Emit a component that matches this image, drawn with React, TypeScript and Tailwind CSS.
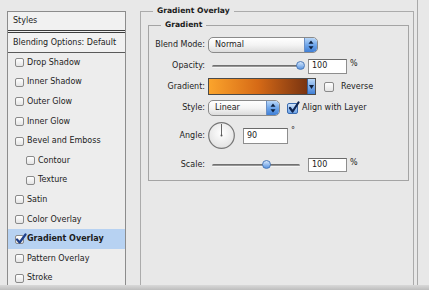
import React from 'react';

const Box: React.FC<{ checked?: boolean; className?: string }> = ({ checked, className = '' }) => (
  <span
    className={`relative inline-block w-[9px] h-[9px] shrink-0 rounded-[2px] border border-[#8a8a8a] bg-gradient-to-b from-white to-[#e4e4e4] ${className}`}
  >
    {checked && (
      <svg className="absolute -top-[3px] -left-[1px]" width="12" height="12" viewBox="0 0 12 12">
        <path d="M2 6.5 L4.6 9.5 L10.5 1.5" fill="none" stroke="#1d3f8a" strokeWidth="2.2" strokeLinecap="round" strokeLinejoin="round" />
      </svg>
    )}
  </span>
);

const Stepper: React.FC = () => (
  <span className="flex items-center justify-center w-[13px] self-stretch rounded-r-[4px] border-l border-[#6b8fc4] bg-gradient-to-b from-[#b9d7f8] via-[#6fa6ea] to-[#3f7fd6]">
    <svg width="6" height="10" viewBox="0 0 6 10">
      <path d="M3 0.5 L5.5 3.8 L0.5 3.8 Z" fill="#0d1f3c" />
      <path d="M3 9.5 L5.5 6.2 L0.5 6.2 Z" fill="#0d1f3c" />
    </svg>
  </span>
);

const Select: React.FC<{ label: string; w: string }> = ({ label, w }) => (
  <div className={`flex h-[16px] ${w} rounded-[5px] border border-[#8a8a8a] bg-gradient-to-b from-white via-[#f4f4f4] to-[#dcdcdc] overflow-hidden`}>
    <span className="flex-1 pl-[6px] leading-[14px]">{label}</span>
    <Stepper />
  </div>
);

const Slider: React.FC<{ thumb: number }> = ({ thumb }) => (
  <div className="relative ml-[3px] w-[98px] h-[12px]">
    <div className="absolute left-[4px] right-[6px] top-[5px] h-[3px] rounded-full bg-gradient-to-b from-[#5e5e5e] to-[#a9a9a9] border-b border-[#f4f4f4]" />
    <div
      className="absolute top-[1px] w-[9px] h-[9px] rounded-full border border-[#4b79b8] bg-gradient-to-b from-[#d4e6fb] to-[#5a95e0]"
      style={{ left: thumb }}
    />
  </div>
);

const Field: React.FC<{ value: string; w: string; h: string; className?: string }> = ({ value, w, h, className = '' }) => (
  <div className={`${w} ${h} border border-[#8e8e8e] border-t-[#6a6a6a] bg-white pl-[3px] flex items-center ${className}`}>
    {value}
  </div>
);

const Row: React.FC<{ label: string; h: string; className?: string; children: React.ReactNode }> = ({ label, h, className = '', children }) => (
  <div className={`flex items-center ${h} ${className}`}>
    <span className="w-[56px] text-right shrink-0">{label}</span>
    {children}
  </div>
);

const styles: { name: string; indent?: boolean; active?: boolean }[] = [
  { name: 'Drop Shadow' },
  { name: 'Inner Shadow' },
  { name: 'Outer Glow' },
  { name: 'Inner Glow' },
  { name: 'Bevel and Emboss' },
  { name: 'Contour', indent: true },
  { name: 'Texture', indent: true },
  { name: 'Satin' },
  { name: 'Color Overlay' },
  { name: 'Gradient Overlay', active: true },
  { name: 'Pattern Overlay' },
  { name: 'Stroke' },
];

const App: React.FC = () => {
  return (
    <div className="w-[429px] h-[290px] overflow-hidden bg-[#e8e8e8] text-[#1c1c1c] text-[8px] font-['DejaVu_Sans',sans-serif] flex flex-col">
      <div className="flex flex-1 min-h-0">
        {/* styles list */}
        <div className="ml-[7px] mt-[11px] w-[119px] border border-b-0 border-[#8c8c8c] bg-[#ededed] flex flex-col">
          <div className="h-[21px] shrink-0 pl-[5px] flex items-center bg-[#f1f1f1] border-b-[3px] border-double border-[#3c3c3c]">Styles</div>
          <div className="h-[20px] shrink-0 pl-[5px] flex items-center bg-[#f1f1f1] border-b border-[#5a5a5a]">Blending Options: Default</div>
          {styles.map((s) => (
            <div
              key={s.name}
              className={`h-[19.6px] shrink-0 flex items-center ${s.indent ? 'pl-[18px]' : 'pl-[7px]'} ${s.active ? 'bg-[#b7d2f2] font-bold' : ''}`}
            >
              <Box checked={s.active} />
              <span className="ml-[3px]">{s.name}</span>
            </div>
          ))}
        </div>

        {/* gradient overlay */}
        <fieldset className="ml-[14px] mt-[4px] w-[274px] border border-b-0 border-[#ababab] flex flex-col">
          <legend className="ml-[12px] px-[4px] h-[14px] leading-[14px] font-bold text-[7.6px]">Gradient Overlay</legend>
          <fieldset className="ml-[7px] mr-[4px] border border-[#a4a4a4] pt-[5px] pb-[8px]">
            <legend className="ml-[12px] px-[4px] h-[14px] leading-[14px] font-bold text-[7.6px]">Gradient</legend>

            <Row label="Blend Mode:" h="h-[16px]">
              <div className="ml-[3px]">
                <Select label="Normal" w="w-[110px]" />
              </div>
            </Row>

            <Row label="Opacity:" h="h-[16px]" className="mt-[5px]">
              <Slider thumb={88} />
              <Field value="100" w="w-[39px]" h="h-[15px]" className="ml-[2px]" />
              <span className="ml-[3px] self-start">%</span>
            </Row>

            <Row label="Gradient:" h="h-[17px]" className="mt-[4px]">
              <div className="ml-[3px] flex h-[17px] border border-[#4a4a4a]">
                <div className="w-[98px] bg-gradient-to-r from-[#fba42c] via-[#d66a16] to-[#7a3410]" />
                <span className="w-[8px] flex items-center justify-center border-l border-[#3d5f94] bg-gradient-to-b from-[#b9d7f8] to-[#3f7fd6]">
                  <svg width="5" height="4" viewBox="0 0 5 4">
                    <path d="M0 0 L5 0 L2.5 4 Z" fill="#0d1f3c" />
                  </svg>
                </span>
              </div>
              <Box className="ml-[8px] !w-[10px] !h-[10px]" />
              <span className="ml-[7px]">Reverse</span>
            </Row>

            <Row label="Style:" h="h-[16px]" className="mt-[5px]">
              <div className="ml-[3px]">
                <Select label="Linear" w="w-[72px]" />
              </div>
              <span className="relative ml-[7px] w-[11px] h-[11px] rounded-[2px] border border-[#3a6bb0] bg-gradient-to-b from-[#cfe3fa] to-[#6ea4e8]">
                <svg className="absolute -top-[3px] left-[0px]" width="12" height="13" viewBox="0 0 12 13">
                  <path d="M2 7 L4.6 10.5 L10.5 1.5" fill="none" stroke="#0f2450" strokeWidth="2.2" strokeLinecap="round" strokeLinejoin="round" />
                </svg>
              </span>
              <span className="ml-[4px]">Align with Layer</span>
            </Row>

            <Row label="Angle:" h="h-[27px]" className="mt-[6px]">
              <svg className="ml-[3px]" width="27" height="27" viewBox="0 0 27 27">
                <defs>
                  <radialGradient id="dial" cx="50%" cy="40%" r="60%">
                    <stop offset="0%" stopColor="#ffffff" />
                    <stop offset="100%" stopColor="#e2e2e2" />
                  </radialGradient>
                </defs>
                <circle cx="13.5" cy="13.5" r="12.8" fill="url(#dial)" stroke="#777" strokeWidth="1.2" />
                <line x1="13.5" y1="13.5" x2="13.5" y2="2" stroke="#555" strokeWidth="0.9" />
                <circle cx="13.5" cy="13.5" r="1" fill="#555" />
              </svg>
              <Field value="90" w="w-[45px]" h="h-[16px]" className="ml-[8px]" />
              <span className="ml-[3px] self-start mt-[3px]">°</span>
            </Row>

            <Row label="Scale:" h="h-[15px]" className="mt-[8px]">
              <Slider thumb={54} />
              <Field value="100" w="w-[39px]" h="h-[14px]" className="ml-[2px]" />
              <span className="ml-[3px] self-start">%</span>
            </Row>
          </fieldset>
        </fieldset>
        <div className="ml-[3px] w-px bg-[#a9a9a9]" />
      </div>
      <div className="h-[5px] bg-gradient-to-b from-[#d9d9d9] to-[#bdbdbd]" />
    </div>
  );
};

export default App;
